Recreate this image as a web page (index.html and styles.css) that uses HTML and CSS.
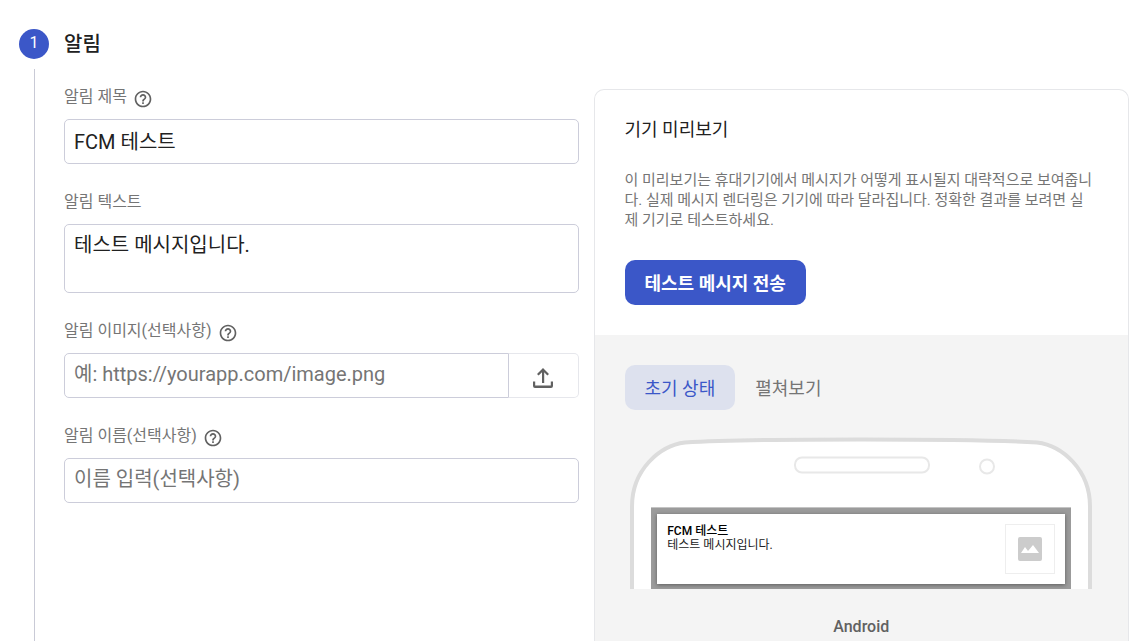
FILE: index.html
```
<!DOCTYPE html>
<html lang="ko">
    <head>
        <meta charset="utf-8">
        <title>알림</title>
        <link rel="stylesheet" href="styles.css">
    </head>

    <body>
        <div class="step">
            <!--Step number and the line under it-->
            <div class="step-rail">
                <div class="step-number">1</div>
                <div class="step-line"></div>
            </div>

            <div class="step-body">
                <h2 class="step-title">알림</h2>

                <div class="columns">
                    <form class="form">
                        <div class="field">
                            <div class="field-label">
                                <label for="title">알림 제목</label>
                                <svg class="help" viewBox="0 0 24 24"><path d="M11 18h2v-2h-2v2zm1-16C6.48 2 2 6.48 2 12s4.48 10 10 10 10-4.48 10-10S17.52 2 12 2zm0 18c-4.41 0-8-3.59-8-8s3.59-8 8-8 8 3.59 8 8-3.59 8-8 8zm0-14c-2.21 0-4 1.79-4 4h2c0-1.1.9-2 2-2s2 .9 2 2c0 2-3 1.75-3 5h2c0-2.25 3-2.5 3-5 0-2.21-1.79-4-4-4z"/></svg>
                            </div>
                            <input class="box" type="text" id="title" value="FCM 테스트">
                        </div>

                        <div class="field">
                            <div class="field-label">
                                <label for="text">알림 텍스트</label>
                            </div>
                            <textarea class="box box-tall" id="text">테스트 메시지입니다.</textarea>
                        </div>

                        <div class="field">
                            <div class="field-label">
                                <label for="image">알림 이미지(선택사항)</label>
                                <svg class="help" viewBox="0 0 24 24"><path d="M11 18h2v-2h-2v2zm1-16C6.48 2 2 6.48 2 12s4.48 10 10 10 10-4.48 10-10S17.52 2 12 2zm0 18c-4.41 0-8-3.59-8-8s3.59-8 8-8 8 3.59 8 8-3.59 8-8 8zm0-14c-2.21 0-4 1.79-4 4h2c0-1.1.9-2 2-2s2 .9 2 2c0 2-3 1.75-3 5h2c0-2.25 3-2.5 3-5 0-2.21-1.79-4-4-4z"/></svg>
                            </div>
                            <div class="upload-row">
                                <input class="box" type="text" id="image" placeholder="예: https://yourapp.com/image.png">
                                <button class="upload" type="button" aria-label="업로드">
                                    <svg viewBox="0 0 20 20"><path d="M9 15V4.300L5.600 7.500 4 5.900 10 0l6 5.900-1.600 1.600L11.200 4.300V15z"/><path d="M0 13.500h2.200v4h15.600v-4H20v4.500a2 2 0 0 1-2 2H2a2 2 0 0 1-2-2z"/></svg>
                                </button>
                            </div>
                        </div>

                        <div class="field">
                            <div class="field-label">
                                <label for="name">알림 이름(선택사항)</label>
                                <svg class="help" viewBox="0 0 24 24"><path d="M11 18h2v-2h-2v2zm1-16C6.48 2 2 6.48 2 12s4.48 10 10 10 10-4.48 10-10S17.52 2 12 2zm0 18c-4.41 0-8-3.59-8-8s3.59-8 8-8 8 3.59 8 8-3.59 8-8 8zm0-14c-2.21 0-4 1.79-4 4h2c0-1.1.9-2 2-2s2 .9 2 2c0 2-3 1.75-3 5h2c0-2.25 3-2.5 3-5 0-2.21-1.79-4-4-4z"/></svg>
                            </div>
                            <input class="box" type="text" id="name" placeholder="이름 입력(선택사항)">
                        </div>
                    </form>

                    <!--Device preview card-->
                    <div class="card">
                        <div class="card-top">
                            <h3 class="card-title">기기 미리보기</h3>
                            <p class="card-text">이 미리보기는 휴대기기에서 메시지가 어떻게 표시될지 대략적으로 보여줍니다. 실제 메시지 렌더링은 기기에 따라 달라집니다. 정확한 결과를 보려면 실제 기기로 테스트하세요.</p>
                            <button class="send" type="button">테스트 메시지 전송</button>
                        </div>

                        <div class="card-preview">
                            <div class="tabs">
                                <button class="tab tab-active" type="button">초기 상태</button>
                                <button class="tab" type="button">펼쳐보기</button>
                            </div>

                            <div class="phone">
                                <svg class="phone-frame" viewBox="0 0 462 151">
                                    <path d="M2 160V69C2 32 30 8 55 5 105 2 170 2 231 2s126 0 176 3c25 3 53 27 53 64v91" fill="#fff" stroke="#dcdcdc" stroke-width="4"/>
                                    <rect x="165" y="20" width="134" height="15" rx="7" fill="#fff" stroke="#e8e8e8" stroke-width="2"/>
                                    <circle cx="357" cy="29" r="7" fill="#fff" stroke="#e8e8e8" stroke-width="2"/>
                                </svg>
                                <div class="screen">
                                    <div class="notice">
                                        <div class="notice-text">
                                            <div class="notice-title">FCM 테스트</div>
                                            <div>테스트 메시지입니다.</div>
                                        </div>
                                        <div class="notice-image">
                                            <svg viewBox="0 0 24 24"><path d="M22 0H2a2 2 0 0 0-2 2v20a2 2 0 0 0 2 2h20a2 2 0 0 0 2-2V2a2 2 0 0 0-2-2zM3 16l4-6 3 4 5-6 6 8z"/></svg>
                                        </div>
                                    </div>
                                </div>
                            </div>

                            <div class="phone-name">Android</div>
                        </div>
                    </div>
                </div>
            </div>
        </div>
    </body>
</html>
```
FILE: styles.css
```
* {
    box-sizing: border-box;
}
body {
    margin: 0;
    font-family: Roboto, "Noto Sans CJK KR", sans-serif;
    color: #212121;
    background-color: white;
}
button, input, textarea {
    font-family: inherit;
}
h2, h3, p {
    margin: 0;
}
.step {
    display: flex;
    gap: 15px;
    min-height: 100vh;
    padding: 29px 17px 0 19px;
}
/*Step number and line*/
.step-rail {
    display: flex;
    flex-direction: column;
    align-items: center;
    gap: 10px;
}
.step-number {
    width: 30px;
    height: 30px;
    border-radius: 50%;
    background-color: #3b57c8;
    color: white;
    font-size: 16px;
    line-height: 28px;
    text-align: center;
}
.step-line {
    flex: 1;
    width: 1px;
    background-color: #c9cad6;
}
.step-body {
    display: flex;
    flex-direction: column;
    flex: 1;
}
.step-title {
    font-size: 20px;
    font-weight: 500;
    line-height: 30px;
}
.columns {
    display: grid;
    flex: 1;
    grid-template-columns: 49fr 51fr;
    gap: 15px;
    margin-top: 30px;
}
/*Form fields*/
.form {
    display: flex;
    flex-direction: column;
    gap: 30px;
}
.field-label {
    display: flex;
    align-items: center;
    gap: 6px;
    height: 20px;
    margin-bottom: 10px;
    color: #757575;
    font-size: 16px;
    line-height: 20px;
}
.field-label label {
    padding-bottom: 4px;
}
.help {
    width: 20px;
    height: 20px;
    fill: #616161;
}
.box {
    display: block;
    width: 100%;
    height: 45px;
    padding: 0 9px 3px;
    border: 1px solid #cccdda;
    border-radius: 5px;
    background-color: white;
    color: #212121;
    font-size: 20px;
}
.box::placeholder {
    color: #757575;
}
.box-tall {
    height: 69px;
    padding-top: 5px;
    line-height: 30px;
    resize: none;
}
.upload-row {
    display: flex;
}
.upload-row .box {
    flex: 1;
    border-radius: 5px 0 0 5px;
}
.upload {
    display: flex;
    align-items: center;
    justify-content: center;
    width: 70px;
    padding: 5px 0 0;
    border: 1px solid #e6e7ec;
    border-left: none;
    border-radius: 0 5px 5px 0;
    background-color: white;
}
.upload svg {
    width: 20px;
    height: 20px;
    fill: #616161;
}
/*Preview card*/
.card {
    display: flex;
    flex-direction: column;
    overflow: hidden;
    border: 1px solid #e6e7ea;
    border-bottom: none;
    border-radius: 10px 10px 0 0;
}
.card-top {
    padding: 25px 30px 30px;
}
.card-title {
    font-size: 18px;
    font-weight: 400;
    line-height: 30px;
}
.card-text {
    margin: 25px 0 30px;
    padding-right: 5px;
    color: #757575;
    font-size: 15px;
    line-height: 20px;
    word-break: break-all;
}
.send, .tab {
    height: 45px;
    padding: 0 20px 2px;
    border: none;
    border-radius: 10px;
    font-size: 18px;
}
.send {
    background-color: #3b57c8;
    color: white;
    font-weight: 700;
}
.card-preview {
    flex: 1;
    padding: 30px 30px 0;
    background-color: #f4f4f4;
}
.tab {
    background-color: transparent;
    color: #757575;
}
.tabs {
    display: flex;
}
.tab-active {
    background-color: #dde1ee;
    color: #3b57c8;
}
/*Phone drawing with the notification inside*/
.phone {
    position: relative;
    max-width: 462px;
    margin: 27px auto 0;
    padding: 70px 21px 0;
}
.phone-frame {
    position: absolute;
    top: 0;
    left: 0;
    width: 100%;
    height: 100%;
}
.screen {
    position: relative;
    padding: 6px 6px 5px;
    border-top: 1px solid #c4c4c4;
    background-color: #9b9b9b;
}
.notice {
    display: flex;
    justify-content: space-between;
    height: 70px;
    padding: 10px;
    background-color: white;
    box-shadow: 0 1px 4px rgba(0, 0, 0, 0.4);
    font-size: 12px;
    line-height: 14px;
}
.notice-title {
    color: #000;
    font-weight: 500;
}
.notice-image {
    display: flex;
    align-items: center;
    justify-content: center;
    width: 50px;
    height: 50px;
    border: 1px solid #eee;
}
.notice-image svg {
    width: 24px;
    height: 24px;
    fill: #ccc;
}
.phone-name {
    margin-top: 28px;
    color: #616161;
    font-size: 16px;
    font-weight: 500;
    line-height: 20px;
    text-align: center;
}
```
